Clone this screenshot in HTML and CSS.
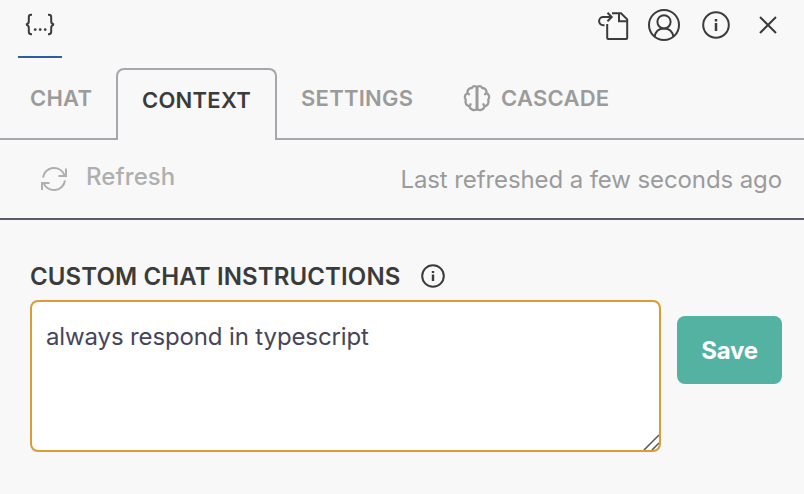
FILE: index.html
```html
<!DOCTYPE html>
<html lang="en">
<head>
<meta charset="utf-8">
<title>Context</title>
<link rel="stylesheet" href="styles.css">
</head>
<body>
<header class="topbar">
  <div class="view-tab">
    <svg width="32" height="24" viewBox="0 0 32 24" fill="none" stroke="#3b3b3b" stroke-width="2"><path d="M8 2.800H7.200Q4.800 2.800 4.800 5.200V9.200Q4.800 12 2 12.500Q4.800 13 4.800 15.800V19.800Q4.800 22.200 7.200 22.200H8M24 2.800H24.800Q27.200 2.800 27.200 5.200V9.200Q27.200 12 30 12.500Q27.200 13 27.200 15.800V19.800Q27.200 22.200 24.800 22.200H24"/><g fill="#3b3b3b" stroke="none"><circle cx="11.200" cy="17.600" r="1.350"/><circle cx="16.200" cy="17.600" r="1.350"/><circle cx="21.200" cy="17.600" r="1.350"/></g></svg>
  </div>
  <div class="actions">
    <svg width="32" height="32" viewBox="0 0 32 32" fill="none" stroke="#3b3b3b" stroke-width="2"><path d="M14 4.200H23L29.200 10.400V29Q29.200 30 28.200 30H10.200Q9.200 30 9.200 29V15M21 4.500V12.200H29M6.500 16.200H5.200A4.100 4.100 0 0 1 5.200 8H13.500M9.500 3.800L13.700 8L9.500 12.200"/></svg>
    <svg width="34" height="34" viewBox="0 0 34 34" fill="none" stroke="#3b3b3b" stroke-width="2"><circle cx="17" cy="17" r="15"/><circle cx="17" cy="13.800" r="6.600"/><path d="M7.700 28.500C8.500 23.500 12 20.400 17 20.400S25.500 23.500 26.300 28.500"/></svg>
    <svg width="30" height="30" viewBox="0 0 30 30" fill="none" stroke="#3b3b3b" stroke-width="2"><circle cx="15" cy="15" r="12.800"/><path d="M15 13V21M15 9V11.500" stroke-width="2.500"/></svg>
    <svg width="22" height="22" viewBox="0 0 22 22" fill="none" stroke="#3b3b3b" stroke-width="2"><path d="M3 3L19 19M19 3L3 19"/></svg>
  </div>
</header>
<nav class="tabs">
  <div class="tab chat"><span>CHAT</span></div>
  <div class="tab active"><span>CONTEXT</span></div>
  <div class="tab settings"><span>SETTINGS</span></div>
  <div class="tab cascade">
    <svg width="28" height="28" viewBox="0 0 28 28" fill="none" stroke="#9b9b9b" stroke-width="2.300" stroke-linejoin="round" stroke-linecap="round"><path d="M14 4V25" stroke-width="3"/><path d="M14 3.500C13 1.700 9.800 1.500 8.800 4C5.800 4 4 6.300 4.600 9C1.800 10.200 1 13.600 2.800 15.800C1.600 19.200 3.600 22 6.400 22.300C7.400 26.400 12 27 14 25M14 3.500C15 1.700 18.200 1.500 19.200 4C22.200 4 24 6.300 23.400 9C26.200 10.200 27 13.600 25.200 15.800C26.400 19.200 24.400 22 21.600 22.300C20.600 26.400 16 27 14 25M4.600 9L6 10.300M23.400 9L22 10.300M6.400 22.300L7.600 20.300M21.600 22.300L20.400 20.300"/></svg>
    <span>CASCADE</span>
  </div>
</nav>
<section class="status">
  <div class="refresh">
    <svg width="28" height="28" viewBox="0 0 28 28" fill="none" stroke="#afafaf" stroke-width="2"><path d="M3 12.500A11.200 11.200 0 0 1 24.500 10M26 3.500V11H18.500M25 15.500A11.200 11.200 0 0 1 3.500 18M2 25V18H9.500"/></svg>
    <span>Refresh</span>
  </div>
  <div class="stamp">Last refreshed a few seconds ago</div>
</section>
<main>
  <div class="heading">
    <h1>CUSTOM CHAT INSTRUCTIONS</h1>
    <svg width="26" height="26" viewBox="0 0 26 26" fill="none" stroke="#3b3b3b" stroke-width="2"><circle cx="13" cy="13" r="10.800"/><path d="M13 11.500V18M13 8V10" stroke-width="2.400"/></svg>
  </div>
  <div class="editor">
    <div class="field">
      <span>always respond in typescript</span>
      <svg class="grip" width="16" height="16" viewBox="0 0 16 16" fill="none" stroke="#555" stroke-width="1.500"><path d="M1 16L16 1M9 16L16 9"/></svg>
    </div>
    <button class="save">Save</button>
  </div>
</main>
</body>
</html>
```
FILE: styles.css
```css
* { box-sizing: border-box; }
body { margin: 0; width: 804px; height: 494px; overflow: hidden; background: #f8f8f8; color: #3b3b3b; font-family: Inter, "Liberation Sans", sans-serif; }
svg { display: block; flex: none; }
.topbar { height: 58px; display: flex; justify-content: space-between; padding: 0 25px 0 18px; }
.view-tab { width: 44px; height: 58px; padding: 12px 0 0 6px; border-bottom: 2px solid #2a5db0; }
.actions { height: 50px; display: flex; align-items: center; }
.actions svg:nth-child(1) { margin-right: 17px; }
.actions svg:nth-child(2) { margin-right: 20px; }
.actions svg:nth-child(3) { margin-right: 26px; }
.tabs { height: 82px; padding-top: 10px; display: flex; font-size: 22px; line-height: 28px; font-weight: 600; color: #9b9b9b; letter-spacing: .25px; white-space: nowrap; }
.tab { border-bottom: 2px solid #a6a6ad; display: flex; padding-top: 16px; }
.chat { width: 116px; padding-left: 30px; }
.active { width: 161px; padding: 16px 0 0 24px; border: 2px solid #a6a6ad; border-bottom: 0; border-radius: 8px 8px 0 0; color: #3b3b3b; }
.settings { width: 186px; padding-left: 24px; }
.cascade { flex: 1; gap: 10px; }
.status { height: 80px; border-bottom: 2px solid #5b5a6b; display: flex; justify-content: space-between; padding: 0 22px 0 40px; color: #9b9b9b; font-size: 24px; line-height: 30px; white-space: nowrap; }
.refresh { display: flex; gap: 18px; padding-top: 22px; color: #afafaf; font-weight: 500; letter-spacing: .1px; }
.refresh svg { margin-top: 3px; }
.stamp { padding-top: 25px; letter-spacing: -.1px; }
main { padding: 42px 22px 0 30px; }
.heading { height: 38px; display: flex; gap: 20px; white-space: nowrap; }
.heading svg { margin-top: 1px; }
h1 { margin: 0; font-size: 24px; line-height: 30px; font-weight: 600; letter-spacing: .12px; }
.editor { display: flex; gap: 16px; align-items: flex-start; }
.field { position: relative; width: 631px; height: 152px; border: 2px solid #db9c35; border-radius: 8px; background: #fff; padding: 20px 14px; color: #45455a; font-size: 24px; line-height: 30px; letter-spacing: -.13px; }
.grip { position: absolute; right: 0; bottom: 0; }
.save { margin-top: 16px; width: 105px; height: 68px; border: 0; border-radius: 8px; padding: 2px 0 0; background: #53b2a2; color: #fff; font: 700 24px/30px Inter, "Liberation Sans", sans-serif; letter-spacing: -.3px; }
```
